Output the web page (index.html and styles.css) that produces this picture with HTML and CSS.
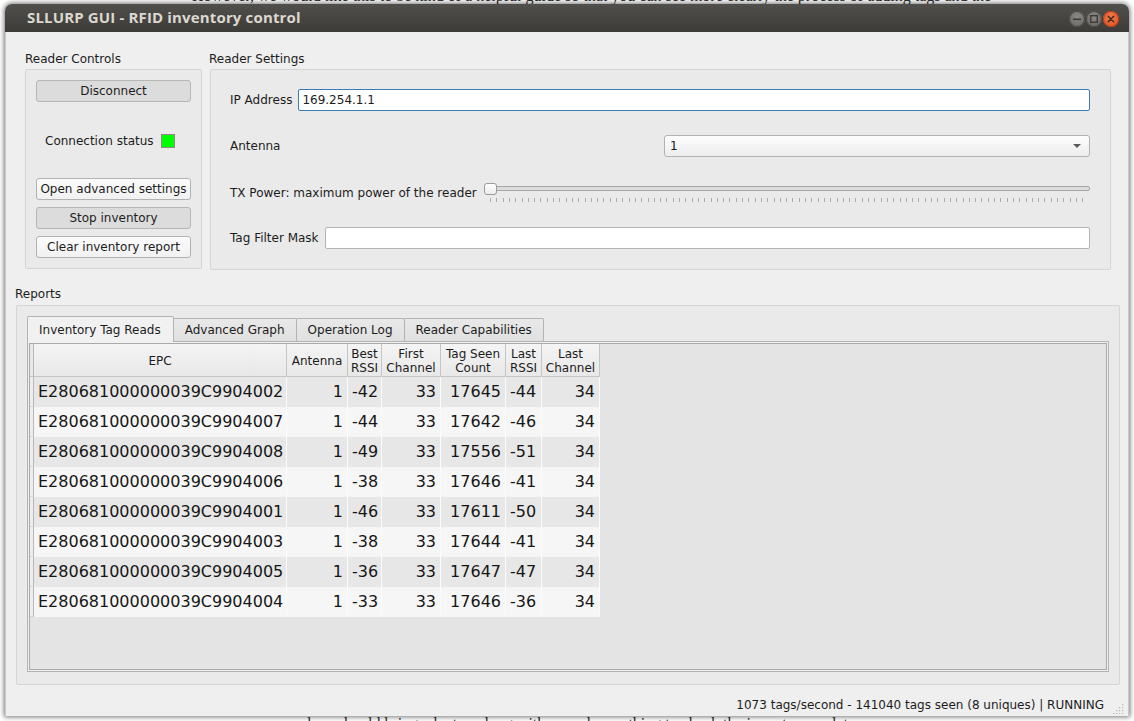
FILE: index.html
```html
<!DOCTYPE html>
<html>
<head>
<meta charset="utf-8">
<title>SLLURP GUI</title>
<link rel="stylesheet" href="styles.css">
</head>
<body>
<div class="bg-text bg-top">However, we would like this to be kind of a helpful guide so that you can see more clearly the process of adding tags and the</div>
<div class="bg-text bg-bottom">and we should bring a laptop along with us and something to check the inventory on later</div>
<div class="window">
  <div class="titlebar">
    <span class="title">SLLURP GUI - RFID inventory control</span>
    <div class="wm-buttons">
      <span class="wm wm-gray"><svg width="16" height="16" viewBox="0 0 16 16"><rect x="4" y="7.5" width="8" height="1.6" fill="#3b3a36"/></svg></span>
      <span class="wm wm-gray"><svg width="16" height="16" viewBox="0 0 16 16"><rect x="4.7" y="4.7" width="6.6" height="6.6" fill="none" stroke="#3b3a36" stroke-width="1.4"/></svg></span>
      <span class="wm wm-close"><svg width="16" height="16" viewBox="0 0 16 16"><path d="M5.3 5.3 L10.7 10.7 M10.7 5.3 L5.3 10.7" stroke="#3b2a22" stroke-width="1.5" stroke-linecap="round"/></svg></span>
    </div>
  </div>
  <div class="content">
    <div class="top">
      <section class="group controls">
        <div class="group-label">Reader Controls</div>
        <div class="group-box controls-box">
          <button class="btn btn-gray">Disconnect</button>
          <div class="status"><span>Connection status</span><span class="led"></span></div>
          <div class="btn-stack">
            <button class="btn">Open advanced settings</button>
            <button class="btn btn-gray">Stop inventory</button>
            <button class="btn">Clear inventory report</button>
          </div>
        </div>
      </section>
      <section class="group settings">
        <div class="group-label">Reader Settings</div>
        <div class="group-box settings-box">
          <div class="row">
            <span class="lbl">IP Address</span>
            <div class="input input-focus">169.254.1.1</div>
          </div>
          <div class="row">
            <span class="lbl">Antenna</span>
            <div class="combo"><span>1</span><span class="arrow"></span></div>
          </div>
          <div class="row">
            <span class="lbl">TX Power: maximum power of the reader</span>
            <div class="slider">
              <div class="groove"></div>
              <div class="ticks"></div>
              <div class="handle"></div>
            </div>
          </div>
          <div class="row">
            <span class="lbl">Tag Filter Mask</span>
            <div class="input"></div>
          </div>
        </div>
      </section>
    </div>
    <section class="reports">
      <div class="group-label rep-label">Reports</div>
      <div class="group-box reports-box">
        <div class="tabs">
          <div class="tab active">Inventory Tag Reads</div>
          <div class="tab">Advanced Graph</div>
          <div class="tab">Operation Log</div>
          <div class="tab">Reader Capabilities</div>
        </div>
        <div class="pane">
          <div class="view">
            <div class="grid">
              <div class="hc corner"></div>
              <div class="hc">EPC</div>
              <div class="hc">Antenna</div>
              <div class="hc">Best<br>RSSI</div>
              <div class="hc">First<br>Channel</div>
              <div class="hc">Tag Seen<br>Count</div>
              <div class="hc">Last<br>RSSI</div>
              <div class="hc">Last<br>Channel</div>

              <div class="vh odd"></div><div class="c odd">E280681000000039C9904002</div><div class="c odd r">1</div><div class="c odd">-42</div><div class="c odd r">33</div><div class="c odd r">17645</div><div class="c odd">-44</div><div class="c odd r">34</div>
              <div class="vh"></div><div class="c">E280681000000039C9904007</div><div class="c r">1</div><div class="c">-44</div><div class="c r">33</div><div class="c r">17642</div><div class="c">-46</div><div class="c r">34</div>
              <div class="vh odd"></div><div class="c odd">E280681000000039C9904008</div><div class="c odd r">1</div><div class="c odd">-49</div><div class="c odd r">33</div><div class="c odd r">17556</div><div class="c odd">-51</div><div class="c odd r">34</div>
              <div class="vh"></div><div class="c">E280681000000039C9904006</div><div class="c r">1</div><div class="c">-38</div><div class="c r">33</div><div class="c r">17646</div><div class="c">-41</div><div class="c r">34</div>
              <div class="vh odd"></div><div class="c odd">E280681000000039C9904001</div><div class="c odd r">1</div><div class="c odd">-46</div><div class="c odd r">33</div><div class="c odd r">17611</div><div class="c odd">-50</div><div class="c odd r">34</div>
              <div class="vh"></div><div class="c">E280681000000039C9904003</div><div class="c r">1</div><div class="c">-38</div><div class="c r">33</div><div class="c r">17644</div><div class="c">-41</div><div class="c r">34</div>
              <div class="vh odd"></div><div class="c odd">E280681000000039C9904005</div><div class="c odd r">1</div><div class="c odd">-36</div><div class="c odd r">33</div><div class="c odd r">17647</div><div class="c odd">-47</div><div class="c odd r">34</div>
              <div class="vh"></div><div class="c">E280681000000039C9904004</div><div class="c r">1</div><div class="c">-33</div><div class="c r">33</div><div class="c r">17646</div><div class="c">-36</div><div class="c r">34</div>
            </div>
          </div>
        </div>
      </div>
    </section>
    <div class="statusbar">
      <span class="status-text">1073 tags/second - 141040 tags seen (8 uniques) | RUNNING</span>
      <svg class="grip" width="11" height="11" viewBox="0 0 11 11">
        <rect x="9" y="1" width="1.2" height="1.2" fill="#b5b5b5"/>
        <rect x="6" y="4" width="1.2" height="1.2" fill="#b5b5b5"/>
        <rect x="9" y="4" width="1.2" height="1.2" fill="#b5b5b5"/>
        <rect x="3" y="7" width="1.2" height="1.2" fill="#b5b5b5"/>
        <rect x="6" y="7" width="1.2" height="1.2" fill="#b5b5b5"/>
        <rect x="9" y="7" width="1.2" height="1.2" fill="#b5b5b5"/>
        <rect x="0" y="10" width="1.2" height="1" fill="#b5b5b5"/>
        <rect x="3" y="10" width="1.2" height="1" fill="#b5b5b5"/>
        <rect x="6" y="10" width="1.2" height="1" fill="#b5b5b5"/>
        <rect x="9" y="10" width="1.2" height="1" fill="#b5b5b5"/>
      </svg>
    </div>
  </div>
</div>
</body>
</html>
```
FILE: styles.css
```css
* { box-sizing: border-box; }
html, body { margin: 0; padding: 0; }
body {
  width: 1134px;
  height: 721px;
  overflow: hidden;
  background: #ffffff;
  position: relative;
  padding: 4px 5px 0 5px;
  font-family: "DejaVu Sans", sans-serif;
  font-size: 12px;
  color: #1c1c1c;
}
.bg-text {
  position: absolute;
  font-family: "Liberation Serif", serif;
  font-size: 16px;
  color: #2a2a2a;
  white-space: nowrap;
}
.bg-top { left: 192px; top: -13px; }
.bg-bottom { left: 288px; top: 715px; }

.window {
  position: relative;
  z-index: 1;
  width: 1124px;
  height: 712px;
  display: flex;
  flex-direction: column;
  background: #efefef;
  border-radius: 7px 7px 0 0;
  box-shadow: 0 0 5px 1px rgba(0, 0, 0, 0.55);
}
.titlebar {
  height: 28px;
  flex: none;
  display: flex;
  align-items: center;
  padding-left: 22px;
  background: linear-gradient(#504f4b, #3c3b37);
  border-radius: 7px 7px 0 0;
}
.title {
  font-family: "Open Sans", sans-serif;
  font-weight: 700;
  font-size: 15px;
  color: #dcd8cf;
  letter-spacing: 0.15px;
  margin-top: -2px;
}
.wm-buttons {
  margin-left: auto;
  margin-right: 10px;
  margin-top: 1px;
  display: flex;
  gap: 1px;
}
.wm {
  width: 16px;
  height: 16px;
  border-radius: 50%;
  display: flex;
}
.wm-gray {
  background: radial-gradient(circle at 50% 35%, #8a8985, #64635f);
  box-shadow: inset 0 0 0 1px #4a4945;
}
.wm-close {
  background: radial-gradient(circle at 50% 35%, #f47a4c, #df4c1a);
  box-shadow: inset 0 0 0 1px #b5401a;
}

.content {
  flex: 1;
  display: flex;
  flex-direction: column;
  border-left: 1px solid #c9c9c9;
  border-right: 1px solid #c9c9c9;
}
.top {
  display: flex;
  gap: 8px;
  padding: 19px 17px 0 19px;
}
.group-label {
  height: 18px;
  line-height: 17px;
}
.group-box {
  border: 1px solid #d5d5d5;
  border-radius: 2px;
  background: #eaeaea;
}
.controls { width: 177px; flex: none; }
.settings { flex: 1; }
.settings .group-label { margin-left: -1px; }

.controls-box {
  height: 200px;
  padding: 10px;
  display: flex;
  flex-direction: column;
}
.btn {
  display: block;
  width: 100%;
  height: 22px;
  padding: 0;
  font-family: "DejaVu Sans", sans-serif;
  font-size: 12px;
  color: #1c1c1c;
  border: 1px solid #b2b2b2;
  border-radius: 3px;
  background: linear-gradient(#fbfbfb, #f1f1f1);
}
.btn-gray {
  background: #dcdcdc;
  border-color: #b6b6b6;
}
.status {
  flex: 1;
  display: flex;
  align-items: center;
  padding-left: 9px;
  padding-top: 1px;
}
.led {
  width: 14px;
  height: 14px;
  margin-left: 7px;
  background: #00ff00;
  border: 1px solid #8a8a8a;
}
.btn-stack {
  display: flex;
  flex-direction: column;
  gap: 7px;
}

.settings-box {
  height: 201px;
  padding: 19px 20px 20px 19px;
  display: flex;
  flex-direction: column;
  justify-content: space-between;
}
.row {
  height: 22px;
  display: flex;
  align-items: center;
}
.row:nth-child(2), .row:nth-child(3) { margin-top: 1px; }
.lbl { white-space: nowrap; }
.input {
  flex: 1;
  height: 22px;
  margin-left: 6px;
  background: #ffffff;
  border: 1px solid #b4b4b4;
  border-radius: 2px;
  padding-left: 3px;
  line-height: 20px;
}
.input-focus { border-color: #3c7bb6; }
.combo {
  margin-left: auto;
  width: 426px;
  height: 22px;
  display: flex;
  align-items: center;
  padding: 0 8px 0 5px;
  border: 1px solid #b2b2b2;
  border-radius: 3px;
  background: linear-gradient(#fdfdfd, #ededed);
}
.arrow {
  margin-left: auto;
  width: 0;
  height: 0;
  border-left: 4px solid transparent;
  border-right: 4px solid transparent;
  border-top: 4px solid #5a5a5a;
}
.slider {
  flex: 1;
  height: 22px;
  margin-left: 7px;
  position: relative;
  display: flex;
  flex-direction: column;
}
.groove {
  margin-top: 4px;
  height: 5px;
  border: 1px solid #a8a8a8;
  border-radius: 2px;
  background: #dcdcdc;
}
.ticks {
  margin: 7px 6px 0 6px;
  height: 4px;
  background: repeating-linear-gradient(to right, #ababab 0 1px, transparent 1px 6.3px);
}
.handle {
  position: absolute;
  left: 0;
  top: 1px;
  width: 13px;
  height: 12px;
  border: 1px solid #9a9a9a;
  border-radius: 3px;
  background: linear-gradient(#ffffff, #ececec);
}

.reports {
  margin-top: 16px;
  padding: 0 8px 0 10px;
}
.rep-label { height: 19px; margin-left: -1px; }
.reports-box {
  height: 380px;
  padding: 10px 10px 12px 10px;
  display: flex;
  flex-direction: column;
}
.tabs {
  display: flex;
  height: 26px;
  flex: none;
  position: relative;
  z-index: 1;
  margin-bottom: -1px;
}
.tab {
  height: 23px;
  margin-top: 2px;
  margin-left: -1px;
  padding: 0 11px;
  line-height: 22px;
  border: 1px solid #b3b3b3;
  border-bottom: none;
  border-radius: 2px 2px 0 0;
  background: linear-gradient(#e9e9e9, #e0e0e0);
  white-space: nowrap;
}
.tab.active {
  height: 26px;
  margin-top: 0;
  margin-left: 0;
  line-height: 26px;
  padding: 0 12px 0 11px;
  background: #f1f1f1;
  position: relative;
  z-index: 1;
}
.pane {
  flex: 1;
  border: 1px solid #b3b3b3;
  background: #f1f1f1;
  padding: 1px;
  display: flex;
}
.view {
  flex: 1;
  border: 1px solid #a9a9a9;
  background: #e4e4e4;
}
.grid {
  display: grid;
  grid-template-columns: 4px 253px 61px 34px 59px 65px 36px 58px;
  grid-auto-rows: 30px;
  grid-template-rows: 33px;
  width: max-content;
}
.hc {
  display: flex;
  align-items: center;
  justify-content: center;
  text-align: center;
  line-height: 14px;
  background: linear-gradient(#f4f4f4, #e8e8e8);
  border-right: 1px solid #c5c5c5;
  border-bottom: 1px solid #c5c5c5;
  padding-top: 1px;
}
.hc.corner { background: #e8e8e8; border-right-color: #b8b8b8; }
.vh {
  background: #ededed;
  border-right: 1px solid #b8b8b8;
  border-bottom: 1px solid #d8d8d8;
}
.c {
  font-size: 16px;
  line-height: 30px;
  padding: 0 4px;
  white-space: nowrap;
  background: #f6f6f6;
  border-right: 1px solid #fbfbfb;
  color: #161616;
}
.c.odd { background: #e7e7e7; }
.c.r { text-align: right; }

.statusbar {
  flex: 1;
  display: flex;
  justify-content: flex-end;
  align-items: flex-start;
  padding: 12px 4px 0 0;
}
.status-text { line-height: 17px; }
.grip { margin: 6px 0 0 9px; }
```
